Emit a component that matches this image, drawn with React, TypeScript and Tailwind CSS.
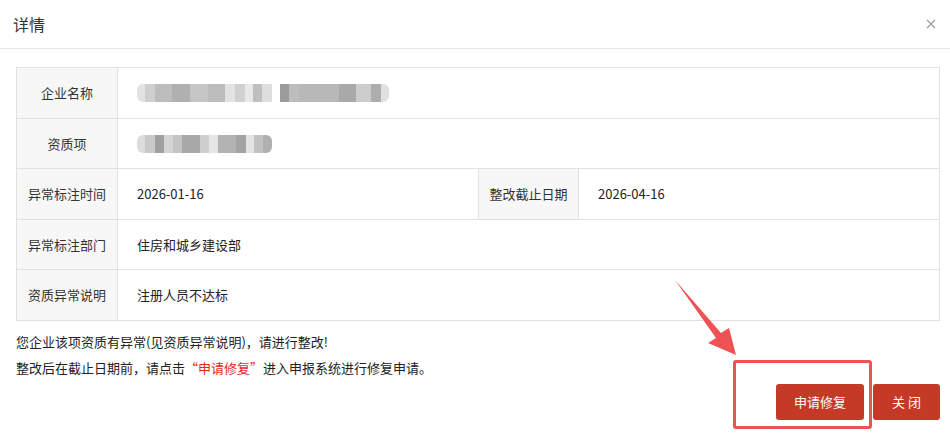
import React from 'react'

// pixelated (mosaic) placeholders for the masked company name / qualification
const nameBlocks = [
  'w-[8px] bg-[#e2e2e2]', 'w-[10px] bg-[#cfcfcf]', 'w-[17px] bg-[#bdbdbd]', 'w-[18px] bg-[#b0b0b0]',
  'w-[18px] bg-[#c6c6c6]', 'w-[17px] bg-[#bcbcbc]', 'w-[10px] bg-[#e3e3e3]', 'w-[10px] bg-[#d0d0d0]',
  'w-[8px] bg-[#e8e8e8]', 'w-[9px] bg-[#bfbfbf]', 'w-[10px] bg-[#dedede]', 'w-[8px] bg-white',
  'w-[9px] bg-[#9c9c9c]', 'w-[10px] bg-[#bdbdbd]', 'w-[40px] bg-[#b8b8b8]', 'w-[17px] bg-[#a9a9a9]',
  'w-[15px] bg-[#cdcdcd]', 'w-[10px] bg-[#adadad]', 'w-[8px] bg-[#e0e0e0]',
]
const itemBlocks = [
  'w-[8px] bg-[#dddddd]', 'w-[10px] bg-[#c9c9c9]', 'w-[9px] bg-[#9f9f9f]', 'w-[9px] bg-[#d4d4d4]',
  'w-[9px] bg-[#c4c4c4]', 'w-[18px] bg-[#a8a8a8]', 'w-[9px] bg-[#cfcfcf]', 'w-[9px] bg-[#e6e6e6]',
  'w-[18px] bg-[#b3b3b3]', 'w-[10px] bg-[#a3a3a3]', 'w-[8px] bg-[#e4e4e4]', 'w-[9px] bg-[#c2c2c2]',
  'w-[9px] bg-[#b0b0b0]',
]

function Mosaic({ blocks }: { blocks: string[] }) {
  return (
    <div className="flex h-[18px] rounded-[6px] overflow-hidden blur-[0.6px]">
      {blocks.map((b, i) => (
        <div key={i} className={`h-full ${b}`}></div>
      ))}
    </div>
  )
}

const label = 'flex items-center justify-center bg-[#f7f7f7] border-r border-b border-[#e1e1e1] text-[#333]'
const value = 'flex items-center pl-[19px] border-r border-b border-[#e1e1e1] text-[#222]'

export default function App() {
  return (
    <div className="relative w-[950px] h-[436px] bg-white overflow-hidden font-['Noto_Sans_CJK_SC','Microsoft_YaHei',sans-serif] text-[13px]">
      {/* Header */}
      <div className="h-[49px] border-b border-[#e5e5e5] flex items-center justify-between pl-[13px] pr-[13px]">
        <span className="text-[16px] text-[#333]">详情</span>
        <svg width="10" height="10" viewBox="0 0 10 10" className="mr-[1px]">
          <path d="M1 1L9 9M9 1L1 9" stroke="#9a9a9a" strokeWidth="1.1" />
        </svg>
      </div>

      {/* Detail table */}
      <div className="ml-4 mt-[18px] w-[924px] border-l border-t border-[#e1e1e1] grid grid-cols-[101px_361px_100px_1fr]">
        <div className={`${label} h-[51px]`}>企业名称</div>
        <div className={`${value} col-span-3 h-[51px] pl-[15px]`}>
          <Mosaic blocks={nameBlocks} />
        </div>

        <div className={`${label} h-[50px]`}>资质项</div>
        <div className={`${value} col-span-3 h-[50px] pl-[15px]`}>
          <Mosaic blocks={itemBlocks} />
        </div>

        <div className={`${label} h-[51px]`}>异常标注时间</div>
        <div className={`${value} h-[51px]`}>2026-01-16</div>
        <div className={`${label} h-[51px]`}>整改截止日期</div>
        <div className={`${value} h-[51px]`}>2026-04-16</div>

        <div className={`${label} h-[50px]`}>异常标注部门</div>
        <div className={`${value} col-span-3 h-[50px]`}>住房和城乡建设部</div>

        <div className={`${label} h-[51px]`}>资质异常说明</div>
        <div className={`${value} col-span-3 h-[51px]`}>注册人员不达标</div>
      </div>

      {/* Notice */}
      <div className="ml-4 mt-2 text-[#222] leading-[26px]">
        <p>您企业该项资质有异常(见资质异常说明)，请进行整改!</p>
        <p>
          整改后在截止日期前，请点击<span className="text-[#e8241f]">“申请修复”</span>进入申报系统进行修复申请。
        </p>
      </div>

      {/* Actions */}
      <div className="flex justify-end gap-[9px] pr-[10px] mt-[3px]">
        <button className="w-[88px] h-[36px] rounded-[3px] bg-[#c43a27] text-white text-[13px]">申请修复</button>
        <button className="w-[67px] h-[36px] rounded-[3px] bg-[#c43a27] text-white text-[13px]">关 闭</button>
      </div>

      {/* Annotation overlay */}
      <div className="absolute left-[733px] top-[360px] w-[139px] h-[69px] border-[3px] border-[#ef5252] rounded-[3px]"></div>
      <svg className="absolute left-[660px] top-[270px]" width="90" height="95" viewBox="660 270 90 95">
        <polygon
          points="675,280 721,333 729,328 736,355 708,343 716,338"
          fill="#ef5252"
        />
      </svg>
    </div>
  )
}
